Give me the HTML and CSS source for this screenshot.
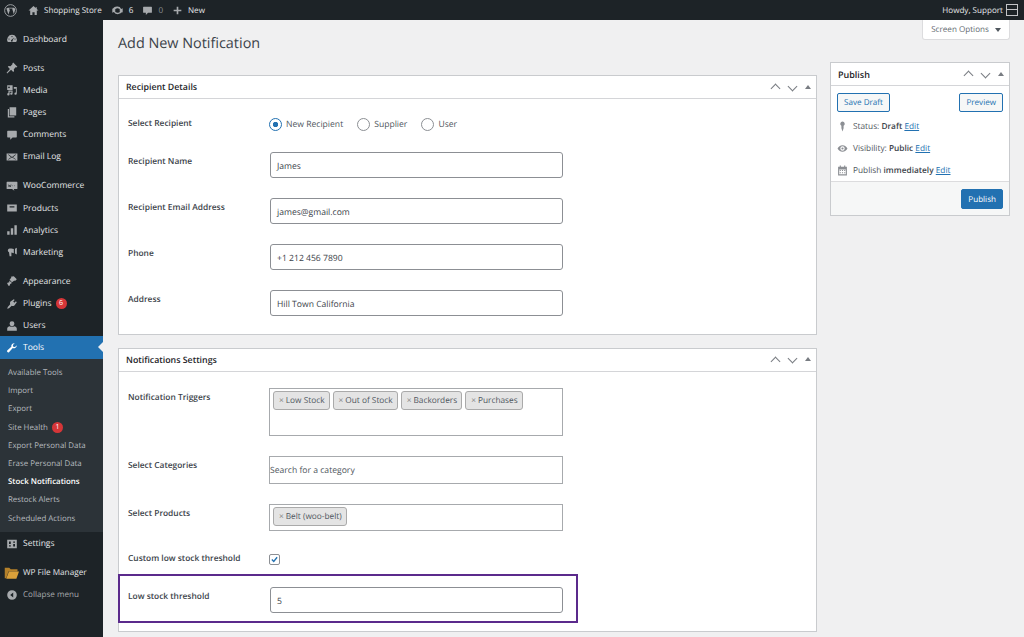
FILE: index.html
```html
<!DOCTYPE html>
<html lang="en">
<head>
    <meta charset="UTF-8">
    <title>Add New Notification</title>
    <link rel="stylesheet" href="styles.css">
</head>
<body>
    <!-- Top admin bar -->
    <header class="admin-bar">
        <div class="bar-group">
            <svg class="bar-logo" viewBox="0 0 20 20"><circle cx="10" cy="10" r="9" fill="none" stroke="currentColor" stroke-width="1.4"/><path d="M3.6 7l3.2 9 2.2-6.2L7.6 7h6.8l-1.8.2 2.5 8.6 2-6.4c.4-1.800-.8-3.600-2-3.600H6L3.600 7z" fill="currentColor"/></svg>
            <span class="bar-item bar-site"><svg class="bar-icon" viewBox="0 0 20 20"><path d="M10 2L1 10h3v8h4v-5h4v5h4v-8h3l-3-2.700V4h-2v1.500z"/></svg>Shopping Store</span>
            <span class="bar-item bar-updates"><svg class="bar-icon" viewBox="0 0 20 20"><path d="M10 4a6 6 0 0 1 5.600 3.800L18 6.500V13l-5.500-2.200 1.600-1A4.500 4.500 0 0 0 5.800 9H2.400A7.500 7.500 0 0 1 10 4zM2 7l5.500 2.200-1.600 1A4.500 4.500 0 0 0 14.200 11h3.400A7.500 7.500 0 0 1 4.400 12.200L2 13.500z"/></svg>6</span>
            <span class="bar-item bar-comments"><svg class="bar-icon" viewBox="0 0 20 20"><path d="M3 3h14a1 1 0 0 1 1 1v9a1 1 0 0 1-1 1h-6l-4 4v-4H3a1 1 0 0 1-1-1V4a1 1 0 0 1 1-1z"/></svg><span class="dim">0</span></span>
            <span class="bar-item bar-new"><svg class="bar-icon" viewBox="0 0 20 20"><path d="M8.500 3h3v5.500H17v3h-5.500V17h-3v-5.500H3v-3h5.500z"/></svg>New</span>
        </div>
        <div class="bar-group">
            <span class="howdy">Howdy, Support</span>
            <span class="avatar"></span>
        </div>
    </header>

    <div class="layout">
        <!-- Left menu -->
        <nav class="sidebar">
            <ul class="menu">
                <li class="menu-item"><svg class="menu-icon" viewBox="0 0 20 20"><path d="M10 3a8 8 0 0 0-7 12h14a8 8 0 0 0-7-12zm0 2a1 1 0 1 1 0 2 1 1 0 0 1 0-2zM5 9a1 1 0 1 1 0 2 1 1 0 0 1 0-2zm10 0a1 1 0 1 1 0 2 1 1 0 0 1 0-2zm-1-2l-3 5a1.500 1.500 0 1 1-2-.5z"/></svg>Dashboard</li>
                <li class="menu-sep"></li>
                <li class="menu-item"><svg class="menu-icon" viewBox="0 0 20 20"><path d="M12 1l7 7-1.500 1-1-.500-3.500 3.500.500 3-1.500 1.500-3.500-3.500L2 19l-1-1 5.500-6.500L3 8l1.500-1.500 3 .5L11 3.500l-.500-1z"/></svg>Posts</li>
                <li class="menu-item"><svg class="menu-icon" viewBox="0 0 20 20"><path d="M2 2h9v8H2zm3 2a1.500 1.500 0 1 0 0 3 1.500 1.500 0 0 0 0-3zM13 5h5v11a2 2 0 1 1-1.500-1.900V8H13zM4 11h7v5a2 2 0 1 1-1.500-1.900V13H6v4a2 2 0 1 1-2-2z"/></svg>Media</li>
                <li class="menu-item"><svg class="menu-icon" viewBox="0 0 20 20"><path d="M6 2h11v14H6zM3 5h2v12h9v2H3z"/></svg>Pages</li>
                <li class="menu-item"><svg class="menu-icon" viewBox="0 0 20 20"><path d="M3 3h14a1 1 0 0 1 1 1v9a1 1 0 0 1-1 1h-6l-4 4v-4H3a1 1 0 0 1-1-1V4a1 1 0 0 1 1-1z"/></svg>Comments</li>
                <li class="menu-item"><svg class="menu-icon" viewBox="0 0 20 20"><path d="M1 4h18v12H1zm2 2l5.500 4.500L3 14h1.500l5-3 .5.400.5-.400 5 3H17l-5.500-3.500L17 6h-1.500L10 10 4.500 6z" fill-rule="evenodd"/></svg>Email Log</li>
                <li class="menu-sep"></li>
                <li class="menu-item"><svg class="menu-icon" viewBox="0 0 20 20"><path d="M2 3h16a1 1 0 0 1 1 1v10a1 1 0 0 1-1 1h-5l1 3-4-3H2a1 1 0 0 1-1-1V4a1 1 0 0 1 1-1z"/><path d="M4 7.500l1 4 1.200-3 1.200 3 1-4M10.500 9.500h1M14 9.500h1" fill="none" stroke="#1d2327"/></svg>WooCommerce</li>
                <li class="menu-item"><svg class="menu-icon" viewBox="0 0 20 20"><path d="M2 4h16v12H2zm4 3v2h8V7z" fill-rule="evenodd"/></svg>Products</li>
                <li class="menu-item"><svg class="menu-icon" viewBox="0 0 20 20"><path d="M2 12h4v6H2zM8 7h4v11H8zM14 2h4v16h-4z"/></svg>Analytics</li>
                <li class="menu-item"><svg class="menu-icon" viewBox="0 0 20 20"><path d="M18 3v11l-3-1.500V4.500zM13 5v7l-4-1.200V17H6l-1-6.400A3.500 3.500 0 0 1 6 4h3z"/></svg>Marketing</li>
                <li class="menu-sep"></li>
                <li class="menu-item"><svg class="menu-icon" viewBox="0 0 20 20"><path d="M13 2l5 5-3 3-1-1-4 3-4-4 3-4-1-1zM5.500 9l4.500 4.500-3 1.500-1 3-1.500 .5L3 16l-1-1.500.5-1.500 3-1z"/></svg>Appearance</li>
                <li class="menu-item"><svg class="menu-icon" viewBox="0 0 20 20"><path d="M13 2l1.500 1.500-2.500 2.500 2 2 2.500-2.500L18 7l-4 5.500c-1.500 1-3 1-4.500.500L5 17l-3 1 1-3 4-4.500c-.500-1.500-.500-3 .500-4.500z"/></svg>Plugins<span class="badge">6</span></li>
                <li class="menu-item"><svg class="menu-icon" viewBox="0 0 20 20"><path d="M10 2a4 4 0 0 1 4 4c0 2.500-1.800 5-4 5S6 8.500 6 6a4 4 0 0 1 4-4zM6.500 10.500C7.500 12 12.500 12 13.500 10.500 16 11 18 12.500 18 14v4H2v-4c0-1.500 2-3 4.500-3.500z"/></svg>Users</li>
                <li class="menu-item is-current"><svg class="menu-icon" viewBox="0 0 20 20"><path d="M18 5.500a5 5 0 0 1-6.800 4.700L5 17a2.200 2.200 0 0 1-3-3l6.800-6.200A5 5 0 0 1 14.500 2L11.500 5l.5 3 3 .5z"/></svg>Tools</li>
            </ul>
            <ul class="submenu">
                <li>Available Tools</li>
                <li>Import</li>
                <li>Export</li>
                <li>Site Health<span class="badge">1</span></li>
                <li>Export Personal Data</li>
                <li>Erase Personal Data</li>
                <li class="is-active">Stock Notifications</li>
                <li>Restock Alerts</li>
                <li>Scheduled Actions</li>
            </ul>
            <ul class="menu">
                <li class="menu-item"><svg class="menu-icon" viewBox="0 0 20 20"><path d="M2 3h16v14H2zm3 3v4h3V6zm7 0v2h3V6zM5 12v2h3v-2zm7-2v4h3v-4z" fill-rule="evenodd"/></svg>Settings</li>
                <li class="menu-sep"></li>
                <li class="menu-item menu-wide"><svg class="menu-icon-wide" viewBox="0 0 20 16"><path d="M1 1h6l2 2h9v3H6L3 15H1z" fill="#b5812a"/><path d="M6.500 6H20l-3.500 9.500H3z" fill="#d9a03a"/></svg>WP File Manager</li>
                <li class="menu-item menu-collapse"><svg class="menu-icon" viewBox="0 0 20 20"><path d="M10 2a8 8 0 1 1 0 16 8 8 0 0 1 0-16zm2 4l-5 4 5 4z" fill-rule="evenodd"/></svg>Collapse menu</li>
            </ul>
        </nav>

        <main class="content">
            <div class="page-head">
                <h1>Add New Notification</h1>
                <div class="screen-tab">Screen Options <span class="caret"></span></div>
            </div>

            <div class="columns">
                <div class="col-main">
                    <section class="box">
                        <div class="box-head">
                            <h2>Recipient Details</h2>
                            <div class="box-arrows"><span class="chev up"></span><span class="chev down"></span><span class="tri"></span></div>
                        </div>
                        <div class="box-body">
                            <div class="row row-inline">
                                <label class="row-label">Select Recipient</label>
                                <div class="radios">
                                    <span class="radio is-on">New Recipient</span>
                                    <span class="radio">Supplier</span>
                                    <span class="radio">User</span>
                                </div>
                            </div>
                            <div class="row">
                                <label class="row-label">Recipient Name</label>
                                <div class="input">James</div>
                            </div>
                            <div class="row">
                                <label class="row-label">Recipient Email Address</label>
                                <div class="input">james@gmail.com</div>
                            </div>
                            <div class="row">
                                <label class="row-label">Phone</label>
                                <div class="input">+1 212 456 7890</div>
                            </div>
                            <div class="row">
                                <label class="row-label">Address</label>
                                <div class="input">Hill Town California</div>
                            </div>
                        </div>
                    </section>

                    <section class="box box-settings">
                        <div class="box-head">
                            <h2>Notifications Settings</h2>
                            <div class="box-arrows"><span class="chev up"></span><span class="chev down"></span><span class="tri"></span></div>
                        </div>
                        <div class="box-body">
                            <div class="row">
                                <label class="row-label">Notification Triggers</label>
                                <div class="select tall">
                                    <span class="tag">Low Stock</span>
                                    <span class="tag">Out of Stock</span>
                                    <span class="tag">Backorders</span>
                                    <span class="tag">Purchases</span>
                                </div>
                            </div>
                            <div class="row">
                                <label class="row-label">Select Categories</label>
                                <div class="select search">Search for a category</div>
                            </div>
                            <div class="row">
                                <label class="row-label">Select Products</label>
                                <div class="select">
                                    <span class="tag">Belt (woo-belt)</span>
                                </div>
                            </div>
                            <div class="row row-inline">
                                <label class="row-label">Custom low stock threshold</label>
                                <span class="checkbox"><svg viewBox="0 0 12 12"><path d="M2.500 6l2.500 2.700L9.500 3" fill="none" stroke="#2271b1" stroke-width="1.800"/></svg></span>
                            </div>
                            <div class="row">
                                <label class="row-label">Low stock threshold</label>
                                <div class="input">5</div>
                            </div>
                        </div>
                        <div class="highlight"></div>
                    </section>
                </div>

                <aside class="col-side">
                    <section class="box">
                        <div class="box-head">
                            <h2 class="publish-title">Publish</h2>
                            <div class="box-arrows"><span class="chev up"></span><span class="chev down"></span><span class="tri"></span></div>
                        </div>
                        <div class="publish-actions">
                            <span class="btn">Save Draft</span>
                            <span class="btn">Preview</span>
                        </div>
                        <div class="publish-info">
                            <div class="info-row"><svg class="info-icon" viewBox="0 0 20 20"><path d="M10 1a4 4 0 0 1 2 7.500V13l-2 6-2-6V8.500A4 4 0 0 1 10 1z"/></svg><span>Status: <b>Draft</b> <a>Edit</a></span></div>
                            <div class="info-row"><svg class="info-icon" viewBox="0 0 20 20"><path d="M10 4c4 0 7.500 3 9 6-1.500 3-5 6-9 6s-7.500-3-9-6c1.500-3 5-6 9-6zm0 2a4 4 0 1 0 0 8 4 4 0 0 0 0-8zm0 2a2 2 0 1 1 0 4 2 2 0 0 1 0-4z" fill-rule="evenodd"/></svg><span>Visibility: <b>Public</b> <a>Edit</a></span></div>
                            <div class="info-row"><svg class="info-icon" viewBox="0 0 20 20"><path d="M2 3h3V1h2v2h6V1h2v2h3v16H2zm2 5v9h12V8zm1 1h2v2H5zm4 0h2v2H9zm4 0h2v2h-2zM5 13h2v2H5zm4 0h2v2H9zm4 0h2v2h-2z" fill-rule="evenodd"/></svg><span>Publish <b>immediately</b> <a>Edit</a></span></div>
                        </div>
                        <div class="publish-foot">
                            <span class="btn btn-primary">Publish</span>
                        </div>
                    </section>
                </aside>
            </div>
        </main>
    </div>
</body>
</html>
```

FILE: styles.css
```css
* {
    box-sizing: border-box;
}

html,
body {
    height: 100%;
}

body {
    margin: 0;
    background-color: #f0f0f1;
    color: #3c434a;
    font-family: "Open Sans", "Noto Sans", sans-serif;
    font-size: 8.600px;
    text-rendering: geometricPrecision;
    overflow: hidden;
}

ul {
    list-style: none;
    margin: 0;
    padding: 0;
}

/* Admin bar */
.admin-bar {
    height: 20px;
    background-color: #1d2327;
    color: #e4e6e8;
    font-size: 8.100px;
    display: flex;
    justify-content: space-between;
    align-items: center;
    padding: 0 6px 0 4px;
}

.bar-group {
    display: flex;
    align-items: center;
}

.bar-logo {
    width: 13px;
    height: 13px;
    color: #a7aaad;
    margin-right: 11px;
}

.bar-item {
    display: flex;
    align-items: center;
    margin-right: 9px;
    white-space: nowrap;
}

.bar-icon {
    width: 11px;
    height: 11px;
    fill: #a7aaad;
    margin-right: 5px;
}

.bar-updates .bar-icon {
    width: 13px;
    height: 13px;
}

.dim {
    color: #8c8f94;
}

.howdy {
    margin-right: 3px;
}

.avatar {
    width: 12px;
    height: 12px;
    border: 1px solid #c3c4c7;
    background: linear-gradient(#1d2327 4.500px, #c3c4c7 4.500px, #c3c4c7 5.500px, #1d2327 5.500px);
}

/* Sidebar */
.layout {
    display: flex;
    height: 617px;
}

.sidebar {
    width: 103px;
    flex-shrink: 0;
    background-color: #1d2327;
    color: #e4e6e8;
    padding-top: 7.500px;
    font-size: 8.500px;
}

.menu-item {
    height: 22.200px;
    display: flex;
    align-items: center;
    padding-left: 6px;
    padding-top: 1px;
    white-space: nowrap;
}

.menu-sep {
    height: 6.800px;
}

.menu-icon {
    width: 12px;
    height: 12px;
    fill: #a7aaad;
    margin-right: 5px;
    flex-shrink: 0;
}

.menu-wide {
    padding-left: 4px;
    font-size: 8.200px;
}

.menu-icon-wide {
    width: 15px;
    height: 12px;
    margin-right: 4px;
    flex-shrink: 0;
}

.menu-collapse {
    color: #a7aaad;
    font-size: 8.100px;
}

.is-current {
    position: relative;
    background-color: #2271b1;
    color: #fff;
}

.is-current .menu-icon {
    fill: #fff;
}

.is-current::after {
    content: "";
    position: absolute;
    right: 0;
    top: 6px;
    border: 5px solid transparent;
    border-left-width: 0;
    border-right-color: #f0f0f1;
}

.submenu {
    background-color: #2c3338;
    color: #b4b9be;
    padding: 5.500px 0 4.500px;
    font-size: 7.900px;
}

.submenu li {
    height: 18.200px;
    display: flex;
    align-items: center;
    padding-left: 8px;
    white-space: nowrap;
}

.submenu .is-active {
    color: #fff;
    font-weight: 600;
}

.badge {
    width: 11px;
    height: 11px;
    border-radius: 50%;
    background-color: #d63638;
    color: #fff;
    font-size: 7px;
    display: inline-flex;
    align-items: center;
    justify-content: center;
    margin-left: 4px;
}

/* Content */
.content {
    flex: 1;
    padding: 0 14px 0 15px;
}

.page-head {
    height: 42px;
    display: flex;
    justify-content: space-between;
    align-items: flex-start;
}

h1 {
    margin: 13px 0 0;
    font-size: 14.400px;
    font-weight: 400;
    line-height: 22px;
    color: #3c434a;
}

.screen-tab {
    width: 88px;
    height: 20px;
    background-color: #fff;
    border: 1px solid #dcdcde;
    border-top: none;
    border-radius: 0 0 3px 3px;
    color: #646970;
    font-size: 8.100px;
    display: flex;
    align-items: center;
    justify-content: center;
    gap: 6px;
}

.caret {
    border: 3px solid transparent;
    border-top: 4px solid #50575e;
    border-bottom-width: 0;
}

.columns {
    display: flex;
    gap: 13px;
    align-items: flex-start;
}

.col-main {
    width: 699px;
    padding-top: 13px;
}

.col-side {
    width: 180px;
}

.box {
    background-color: #fff;
    border: 1px solid #c9cbce;
    position: relative;
}

.box-settings {
    margin-top: 12.500px;
}

.box-head {
    height: 23px;
    border-bottom: 1px solid #d4d5d8;
    display: flex;
    align-items: center;
    justify-content: space-between;
    padding: 0 5px 0 7px;
}

h2 {
    margin: 0;
    font-size: 8.800px;
    font-weight: 600;
    color: #1d2327;
}

.publish-title {
    font-size: 9px;
}

.box-arrows {
    display: flex;
    align-items: center;
    gap: 9.500px;
}

.chev {
    width: 7px;
    height: 7px;
    border: solid #787c82;
    border-width: 1.500px 0 0 1.500px;
}

.chev.up {
    transform: rotate(45deg);
    margin: 3px 0 0;
}

.chev.down {
    transform: rotate(225deg);
    margin: 0 0 2px;
}

.tri {
    border: 3px solid transparent;
    border-bottom: 4px solid #787c82;
    border-top-width: 0;
    margin-bottom: 1px;
}

.box-body {
    padding: 17px 9px 18px 9px;
}

.box-settings .box-body {
    padding: 16.500px 9px 18px 9px;
}

.row {
    display: grid;
    grid-template-columns: 142px 292.500px;
    align-items: start;
    margin-top: 20px;
}

.row:first-child {
    margin-top: 0;
}

.row-inline {
    align-items: center;
}

.row-label {
    font-weight: 600;
    font-size: 8.400px;
    color: #3c434a;
    line-height: 19px;
}

.row-inline .row-label {
    line-height: 16px;
}

.input {
    height: 26px;
    border: 1px solid #8c8f94;
    border-radius: 3px;
    padding: 1px 0 0 6px;
    display: flex;
    align-items: center;
    color: #3c434a;
    background-color: #fff;
}

.radios {
    display: flex;
    gap: 14px;
    margin-left: -1px;
}

.radio {
    display: flex;
    align-items: center;
    gap: 4px;
    color: #50575e;
}

.radio::before {
    content: "";
    width: 11px;
    height: 11px;
    border: 1px solid #8c8f94;
    border-radius: 50%;
    background-color: #fff;
}

.radio.is-on::before {
    border-color: #2271b1;
    background: radial-gradient(circle, #2271b1 0, #2271b1 2.400px, #fff 3px);
}

.select {
    border: 1px solid #a7aaad;
    padding: 2px 3px;
    min-height: 27px;
    display: flex;
    align-items: flex-start;
    gap: 3px;
    color: #50575e;
    margin-left: -1px;
}

.select.tall {
    height: 48px;
}

.select.search {
    height: 28px;
    align-items: center;
    padding-left: 0;
}

.tag {
    height: 19px;
    padding: 0 4px 0 5px;
    background-color: #e4e4e4;
    border: 1px solid #aaa;
    border-radius: 3px;
    font-size: 8.300px;
    display: inline-flex;
    align-items: center;
    white-space: nowrap;
}

.tag::before {
    content: "×";
    color: #888;
    margin-right: 2px;
}

.checkbox {
    width: 11px;
    height: 11px;
    border: 1px solid #8c8f94;
    border-radius: 2px;
    display: flex;
    margin-left: -1px;
}

.checkbox svg {
    width: 100%;
    height: 100%;
}

.highlight {
    position: absolute;
    left: -1px;
    bottom: 8px;
    width: 460px;
    height: 49px;
    border: 2px solid #5b2a8c;
    pointer-events: none;
}

/* Publish box */
.publish-actions {
    display: flex;
    justify-content: space-between;
    padding: 7px 6px 0;
}

.btn {
    height: 19px;
    padding: 0 6px;
    border: 1px solid #2271b1;
    border-radius: 2px;
    background-color: #f6f7f7;
    color: #2271b1;
    display: inline-flex;
    align-items: center;
    font-size: 8.100px;
}

.publish-info {
    padding: 4px 6px 0;
}

.info-row {
    height: 21.700px;
    display: flex;
    align-items: center;
    white-space: pre;
    color: #50575e;
    font-size: 8.300px;
}

.info-row b {
    font-weight: 600;
    color: #3c434a;
}

.info-row a {
    color: #2271b1;
    text-decoration: underline;
}

.info-icon {
    width: 11px;
    height: 11px;
    fill: #8c8f94;
    margin-right: 5px;
    flex-shrink: 0;
}

.publish-foot {
    background-color: #f6f7f7;
    border-top: 1px solid #dcdcde;
    padding: 7px 6px 6px;
    display: flex;
    justify-content: flex-end;
}

.btn-primary {
    height: 20px;
    background-color: #2271b1;
    color: #fff;
}
```
